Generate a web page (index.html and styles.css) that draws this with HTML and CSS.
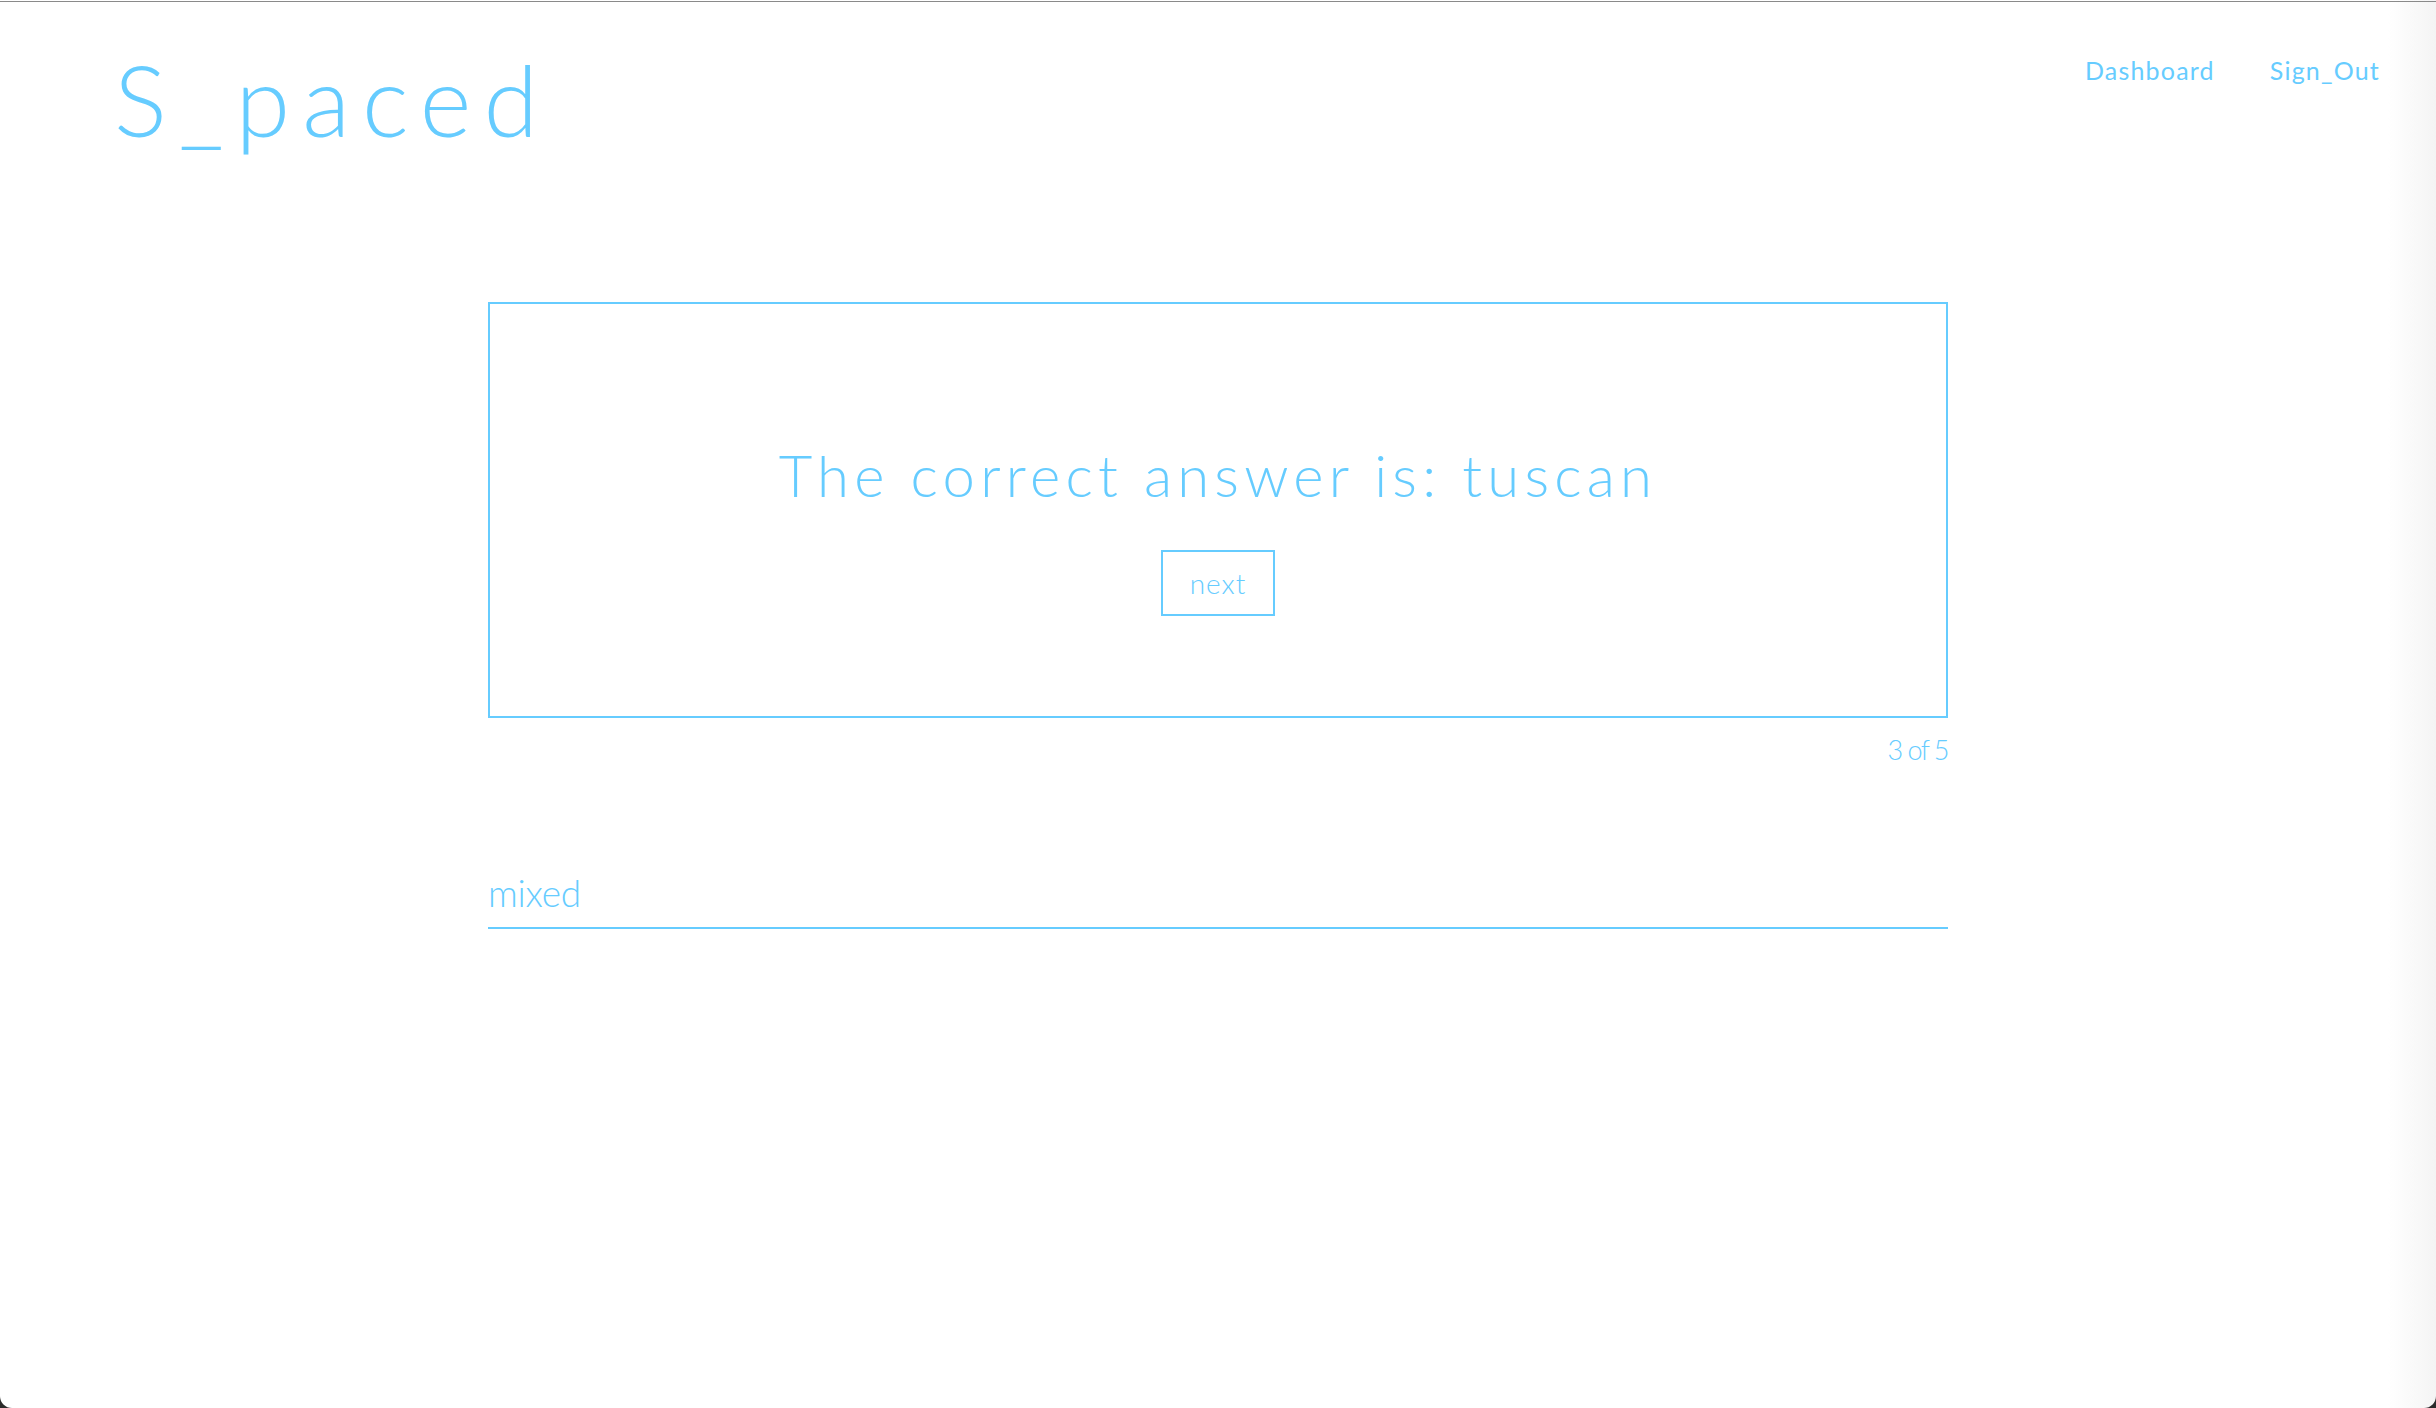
FILE: index.html
```html
<!DOCTYPE html>
<html lang="en">
<head>
<meta charset="utf-8">
<title>S_paced</title>
<link rel="stylesheet" href="styles.css">
</head>
<body>
<div class="window">
  <div class="topline"></div>
  <header class="header">
    <div class="logo">S_paced</div>
    <nav class="nav">
      <a class="nav-link" href="#">Dashboard</a>
      <a class="nav-link" href="#">Sign_Out</a>
    </nav>
  </header>
  <main class="main">
    <section class="card">
      <h1 class="answer">The correct answer is: tuscan</h1>
      <button class="next-btn" type="button">next</button>
    </section>
    <div class="progress">3 of 5</div>
    <input class="deck-input" type="text" value="mixed">
  </main>
</div>
</body>
</html>
```
FILE: styles.css
```css
html, body {
  margin: 0;
  padding: 0;
  background: #2b2b2b;
}
.window {
  box-sizing: border-box;
  height: 1408px;
  background: linear-gradient(to right, #ffffff calc(100% - 48px), #f4f4f4 100%);
  border-radius: 0 0 12px 12px;
  overflow: hidden;
  font-family: "Lato", "Noto Sans", sans-serif;
  font-weight: 300;
  color: #66ccff;
}
.topline {
  margin-top: 1px;
  height: 1px;
  background: #8a8a8a;
}
.header {
  display: flex;
  justify-content: space-between;
  align-items: flex-start;
  padding: 47px 56px 0 114px;
}
.logo {
  font-size: 99px;
  line-height: 1;
  letter-spacing: 12px;
}
.nav {
  display: flex;
  gap: 55px;
  margin-top: 9px;
}
.nav-link {
  font-size: 25px;
  font-weight: 400;
  line-height: 1;
  letter-spacing: 1.2px;
  color: #66ccff;
  text-decoration: none;
}
.main {
  width: 1460px;
  margin: 154px auto 0;
  display: flex;
  flex-direction: column;
}
.card {
  box-sizing: border-box;
  height: 416px;
  border: 2px solid #66ccff;
  padding-top: 142px;
  display: flex;
  flex-direction: column;
  align-items: center;
}
.answer {
  margin: 0;
  font-size: 58px;
  line-height: 1;
  font-weight: 300;
  letter-spacing: 5.2px;
}
.next-btn {
  margin-top: 46px;
  background: #fff;
  border: 2px solid #66ccff;
  padding: 17px 27px;
  font-family: inherit;
  font-weight: 300;
  font-size: 28px;
  line-height: 1;
  letter-spacing: 1px;
  color: #66ccff;
}
.progress {
  align-self: flex-end;
  margin-top: 18px;
  font-size: 27px;
  line-height: 1;
  letter-spacing: -1.5px;
}
.deck-input {
  margin-top: 108px;
  box-sizing: content-box;
  width: 1460px;
  height: 44px;
  line-height: 44px;
  padding: 0 0 12px 0;
  border: none;
  border-bottom: 2px solid #66ccff;
  outline: none;
  background: transparent;
  font-family: inherit;
  font-weight: 300;
  font-size: 37px;
  letter-spacing: -0.3px;
  color: #66ccff;
}
```
